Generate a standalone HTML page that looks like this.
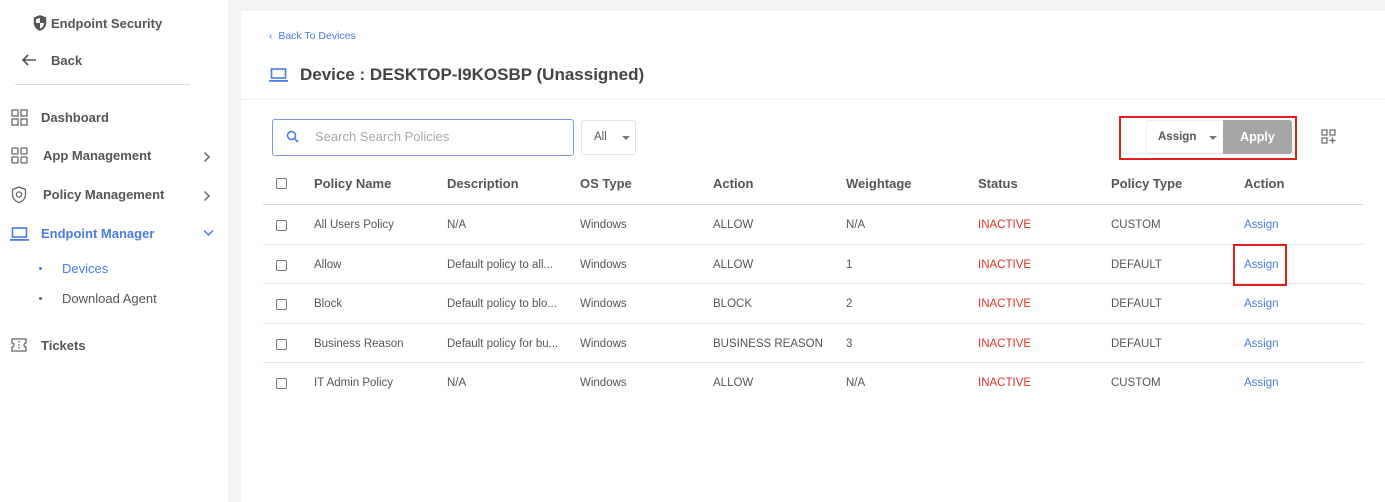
<!DOCTYPE html>
<html><head><style>
*{box-sizing:border-box;margin:0;padding:0}
body{width:1385px;height:502px;background:#f3f3f3;font-family:"Liberation Sans",sans-serif;position:relative;overflow:hidden;color:#444}
.side{position:absolute;left:0;top:0;width:228px;height:502px;background:#fff}
.main{position:absolute;left:241px;top:11px;width:1144px;height:491px;background:#fff}
.a{position:absolute;white-space:nowrap}
.si{font-size:13px;font-weight:bold;color:#555}
.th{font-size:13px;font-weight:bold;color:#555;top:176px}
.td{font-size:11.5px;color:#555}
.line{position:absolute;left:263px;width:1100px;height:1px;background:#e3e3e3}
.cb{position:absolute;left:276px;width:11px;height:11px;border:1.3px solid #777;border-radius:2px}
.red{color:#e0302c}.blue{color:#4a7be0}
</style></head><body>
<div class="side">
<svg class="a" style="left:32px;top:14px" width="16" height="18" viewBox="0 0 14 16"><path d="M7 1L1.5 3v5c0 3.5 2.5 6 5.5 7c3-1 5.5-3.5 5.5-7V3z" fill="#555"/><path d="M7 3.5v9.5c2-.8 3.5-2.8 3.5-5H7z" fill="#fff"/><path d="M7 3.5v4.5H3.5V4.6z" fill="#fff"/></svg>
<div class="a si" style="left:51px;top:16px">Endpoint Security</div>
<svg class="a" style="left:21px;top:53px" width="16" height="14" viewBox="0 0 16 14"><path d="M15 7H2M7 2L2 7l5 5" stroke="#555" stroke-width="1.6" fill="none"/></svg>
<div class="a si" style="left:51px;top:53px">Back</div>
<div class="a" style="left:15px;top:84px;width:175px;height:1px;background:#ddd"></div>
<svg class="a" style="left:11px;top:109px" width="17" height="17" viewBox="0 0 17 17" fill="none" stroke="#666" stroke-width="1.3"><rect x="1" y="1" width="6" height="6"/><rect x="10" y="1" width="6" height="6"/><rect x="1" y="10" width="6" height="6"/><rect x="10" y="10" width="6" height="6"/></svg>
<div class="a si" style="left:41px;top:110px">Dashboard</div>
<svg class="a" style="left:11px;top:147px" width="17" height="17" viewBox="0 0 17 17" fill="none" stroke="#666" stroke-width="1.3"><rect x="1" y="1" width="6" height="6" rx="1"/><rect x="10" y="1" width="6" height="6" rx="1"/><rect x="1" y="10" width="6" height="6" rx="1"/><rect x="10" y="10" width="6" height="6" rx="1"/></svg>
<div class="a si" style="left:43px;top:148px">App Management</div>
<svg class="a" style="left:203px;top:151px" width="8" height="12" viewBox="0 0 8 12"><path d="M1.5 1.5l4.5 4.5l-4.5 4.5" stroke="#666" stroke-width="1.5" fill="none"/></svg>
<svg class="a" style="left:11px;top:186px" width="16" height="18" viewBox="0 0 16 18" fill="none" stroke="#666" stroke-width="1.3"><path d="M8 1L1.5 3.5v5c0 4 3 7 6.5 8c3.5-1 6.5-4 6.5-8v-5z"/><circle cx="8" cy="8.5" r="2.6"/></svg>
<div class="a si" style="left:43px;top:187px">Policy Management</div>
<svg class="a" style="left:203px;top:190px" width="8" height="12" viewBox="0 0 8 12"><path d="M1.5 1.5l4.5 4.5l-4.5 4.5" stroke="#666" stroke-width="1.5" fill="none"/></svg>
<svg class="a" style="left:10px;top:227px" width="19" height="14" viewBox="0 0 19 14"><rect x="2.5" y="1" width="14" height="9" fill="none" stroke="#4a7be0" stroke-width="1.6"/><rect x="0" y="12" width="19" height="1.8" fill="#4a7be0"/></svg>
<div class="a si" style="left:41px;top:226px;color:#4a7be0">Endpoint Manager</div>
<svg class="a" style="left:203px;top:229px" width="11" height="8" viewBox="0 0 11 8"><path d="M1 1.5l4.5 4.5l4.5-4.5" stroke="#4a7be0" stroke-width="1.5" fill="none"/></svg>
<div class="a" style="left:39px;top:267px;width:3px;height:3px;border-radius:50%;background:#4a7be0"></div>
<div class="a" style="left:62px;top:261px;font-size:13px;color:#4a7be0">Devices</div>
<div class="a" style="left:39px;top:297px;width:3px;height:3px;border-radius:50%;background:#666"></div>
<div class="a" style="left:62px;top:291px;font-size:13px;color:#555">Download Agent</div>
<svg class="a" style="left:11px;top:338px" width="16" height="14" viewBox="0 0 16 14" fill="none" stroke="#666" stroke-width="1.3"><path d="M1 1h14v4a2 2 0 0 0 0 4v4H1V9a2 2 0 0 0 0-4z"/><path d="M8 3v8" stroke-dasharray="1.5 1.5"/></svg>
<div class="a si" style="left:41px;top:338px">Tickets</div>
</div>
<div class="main"></div>
<div class="a" style="left:269px;top:30px;font-size:10.5px;color:#4a7be0">‹&nbsp; Back To Devices</div>
<svg class="a" style="left:269px;top:68px" width="19" height="14" viewBox="0 0 19 14"><rect x="2.5" y="1" width="14" height="9" fill="none" stroke="#4a7be0" stroke-width="1.6"/><rect x="0" y="12" width="19" height="1.8" fill="#4a7be0"/></svg>
<div class="a" style="left:300px;top:65px;font-size:17px;font-weight:bold;color:#444">Device : DESKTOP-I9KOSBP (Unassigned)</div>
<div class="a" style="left:241px;top:99px;width:1144px;height:1px;background:#eee"></div>
<div class="a" style="left:272px;top:119px;width:302px;height:37px;border:1px solid #7d9be6;border-radius:3px"></div>
<svg class="a" style="left:286px;top:130px" width="13" height="13" viewBox="0 0 13 13"><circle cx="5.5" cy="5.5" r="4" stroke="#4a7be0" stroke-width="1.6" fill="none"/><path d="M8.5 8.5l3.5 3.5" stroke="#4a7be0" stroke-width="1.6"/></svg>
<div class="a" style="left:315px;top:129px;font-size:13px;color:#aaa">Search Search Policies</div>
<div class="a" style="left:581px;top:120px;width:55px;height:35px;border:1px solid #e3e3e3;border-radius:3px"></div>
<div class="a" style="left:594px;top:131px;font-size:11.5px;color:#555">All</div>
<div class="a" style="left:622px;top:136px;border:4px solid transparent;border-top:4px solid #777"></div>
<div class="a" style="left:1119px;top:116px;width:178px;height:44px;border:2px solid #e02020"></div>
<div class="a" style="left:1146px;top:120px;width:145px;height:34px;border:1px solid #eee;border-radius:3px"></div>
<div class="a" style="left:1158px;top:131px;font-size:11.5px;font-weight:bold;color:#555">Assign</div>
<div class="a" style="left:1209px;top:136px;border:4px solid transparent;border-top:4px solid #777"></div>
<div class="a" style="left:1223px;top:120px;width:69px;height:34px;background:#a6a6a6;border-radius:0 3px 3px 0;color:#fff;font-size:12.5px;font-weight:bold;text-align:center;line-height:34px">Apply</div>
<svg class="a" style="left:1321px;top:129px" width="15" height="15" viewBox="0 0 15 15" fill="none" stroke="#666" stroke-width="1.2"><rect x="1" y="1" width="5" height="5"/><rect x="9" y="1" width="5" height="5"/><rect x="1" y="9" width="5" height="5"/><path d="M11.5 8.5v6M8.5 11.5h6"/></svg>
<div class="cb" style="top:178px"></div>
<div class="a th" style="left:314px">Policy Name</div>
<div class="a th" style="left:447px">Description</div>
<div class="a th" style="left:580px">OS Type</div>
<div class="a th" style="left:713px">Action</div>
<div class="a th" style="left:846px">Weightage</div>
<div class="a th" style="left:978px">Status</div>
<div class="a th" style="left:1111px">Policy Type</div>
<div class="a th" style="left:1244px">Action</div>
<div class="line" style="top:204px;background:#d8d8d8"></div>
<div class="line" style="top:244px"></div>
<div class="line" style="top:283px"></div>
<div class="line" style="top:323px"></div>
<div class="line" style="top:362px"></div>
<div class="a" style="left:1233px;top:244px;width:54px;height:42px;border:2px solid #e02020"></div>
<div id="rows"></div>
<script>
var r=[["All Users Policy","N/A","Windows","ALLOW","N/A","CUSTOM"],["Allow","Default policy to all...","Windows","ALLOW","1","DEFAULT"],["Block","Default policy to blo...","Windows","BLOCK","2","DEFAULT"],["Business Reason","Default policy for bu...","Windows","BUSINESS REASON","3","DEFAULT"],["IT Admin Policy","N/A","Windows","ALLOW","N/A","CUSTOM"]];
var h="",xs=[314,447,580,713,846];
r.forEach(function(d,i){var y=219+i*39.6;
h+='<div class="cb" style="top:'+(y+1)+'px"></div>';
d.slice(0,5).forEach(function(t,j){h+='<div class="a td" style="left:'+xs[j]+'px;top:'+y+'px">'+t+'</div>'});
h+='<div class="a td red" style="left:978px;top:'+y+'px">INACTIVE</div><div class="a td" style="left:1111px;top:'+y+'px">'+d[5]+'</div><div class="a td blue" style="left:1244px;top:'+y+'px">Assign</div>';});
document.getElementById("rows").innerHTML=h;
</script>
</body></html>
